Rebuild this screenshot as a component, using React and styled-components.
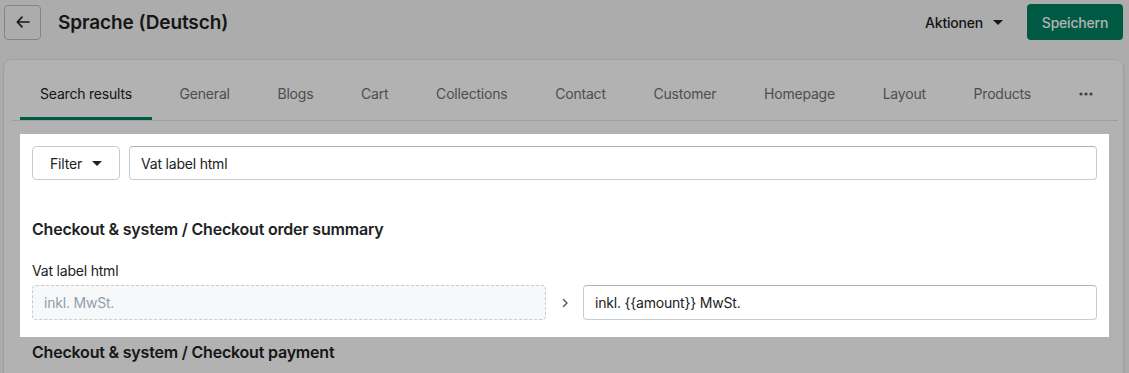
import React from "react";
import styled, { createGlobalStyle } from "styled-components";

const GlobalStyle = createGlobalStyle`
  html, body {
    margin: 0;
    padding: 0;
    background: #f6f6f7;
    overflow: hidden;
  }
  body {
    font-family: Inter, "Noto Sans", "Liberation Sans", sans-serif;
    color: #202223;
    letter-spacing: -0.2px;
    -webkit-font-smoothing: antialiased;
  }
  * {
    box-sizing: border-box;
  }
  button {
    letter-spacing: inherit;
  }
`;

const Page = styled.div`
  padding: 4px 6px 0 4px;
  height: 373px;
  overflow: hidden;
`;

const Header = styled.header`
  display: flex;
  align-items: center;
  height: 36px;
`;

const BackButton = styled.button`
  width: 37px;
  height: 35px;
  display: flex;
  align-items: center;
  justify-content: center;
  border: 1px solid #babfc3;
  border-radius: 4px;
  background: #f6f6f7;
  color: #202223;
  padding: 0;
`;

const Title = styled.h1`
  margin: 0 0 0 17px;
  font-size: 19px;
  font-weight: 600;
  letter-spacing: -0.1px;
  flex: 1;
`;

const ActionsButton = styled.button`
  display: flex;
  align-items: center;
  gap: 10px;
  border: 0;
  background: transparent;
  font: inherit;
  font-size: 14px;
  font-weight: 500;
  color: #202223;
  padding: 0;
  margin-right: 24px;
`;

const Caret = styled.span`
  width: 0;
  height: 0;
  border-left: 5px solid transparent;
  border-right: 5px solid transparent;
  border-top: 5px solid currentColor;
`;

const SaveButton = styled.button`
  height: 36px;
  width: 96px;
  border: 0;
  border-radius: 4px;
  background: #008060;
  color: #fff;
  font: inherit;
  font-size: 14px;
  font-weight: 500;
`;

const Card = styled.section`
  margin-top: 20px;
  background: #fff;
  border-radius: 8px;
  box-shadow: 0 0 0 1px rgba(63, 63, 68, 0.05), 0 1px 3px rgba(63, 63, 68, 0.15);
  height: 330px;
`;

const Tabs = styled.nav`
  display: flex;
  gap: 7.7px;
  margin: 0 5px 0 8px;
  padding-left: 8px;
  border-bottom: 1px solid #e1e3e5;
`;

const Tab = styled.button`
  flex-shrink: 0;
  white-space: nowrap;
  height: 60px;
  padding: 24px 20px 13px;
  border: 0;
  border-bottom: 3px solid ${({ $active }) => ($active ? "#008060" : "transparent")};
  background: transparent;
  font: inherit;
  font-size: 14px;
  line-height: 20px;
  color: ${({ $active }) => ($active ? "#202223" : "#6d7175")};
  display: flex;
  align-items: center;
`;

const Spotlight = styled.div`
  position: relative;
  z-index: 2;
  margin: 13px 14px 0 16px;
  padding: 12px 12px 17px;
  background: #fff;
  box-shadow: 0 0 0 3000px rgba(0, 0, 0, 0.3);
`;

const FilterRow = styled.div`
  display: flex;
  gap: 9px;
`;

const FilterButton = styled.button`
  width: 88px;
  height: 34px;
  display: flex;
  align-items: center;
  justify-content: center;
  gap: 10px;
  border: 1px solid #c9cccf;
  border-radius: 4px;
  background: #fff;
  font: inherit;
  font-size: 14px;
  color: #202223;
`;

const SearchInput = styled.div`
  flex: 1;
  height: 34px;
  display: flex;
  align-items: center;
  padding: 0 11px;
  border: 1px solid #c9cccf;
  border-top-color: #aeb4b9;
  border-radius: 4px;
  font-size: 14px;
`;

const SectionTitle = styled.h2`
  margin: ${({ $top }) => $top}px 0 0;
  font-size: 16px;
  line-height: 24px;
  font-weight: 600;
  letter-spacing: -0.2px;
  color: #202223;
`;

const FieldLabel = styled.div`
  margin-top: 20px;
  font-size: 14px;
  line-height: 20px;
`;

const FieldRow = styled.div`
  margin-top: 4px;
  display: grid;
  grid-template-columns: 1fr 37px 1fr;
  align-items: center;
`;

const SourceField = styled.div`
  height: 35px;
  display: flex;
  align-items: center;
  padding: 0 11px;
  border: 1px dashed #c4cdd5;
  border-radius: 4px;
  background: #f6f8fa;
  color: #919eab;
  font-size: 14px;
`;

const Chevron = styled.div`
  display: flex;
  justify-content: center;
  color: #5c5f62;
`;

const TargetField = styled(SearchInput)`
  height: 35px;
`;

const Below = styled.div`
  padding: 3px 0 0 28px;
`;

const tabs = [
  "Search results",
  "General",
  "Blogs",
  "Cart",
  "Collections",
  "Contact",
  "Customer",
  "Homepage",
  "Layout",
  "Products",
];

const App = () => (
  <>
    <GlobalStyle />
    <Page>
      <Header>
        <BackButton aria-label="Zurück">
          <svg width="20" height="20" viewBox="0 0 20 20" fill="none">
            <path
              d="M16 10H4.5M9 5.2 4.3 10 9 14.8"
              stroke="currentColor"
              strokeWidth="1.7"
              strokeLinecap="round"
              strokeLinejoin="round"
            />
          </svg>
        </BackButton>
        <Title>Sprache (Deutsch)</Title>
        <ActionsButton>
          Aktionen <Caret />
        </ActionsButton>
        <SaveButton>Speichern</SaveButton>
      </Header>

      <Card>
        <Tabs>
          {tabs.map((t, i) => (
            <Tab key={t} $active={i === 0}>
              {t}
            </Tab>
          ))}
          <Tab aria-label="Mehr">
            <svg width="14" height="4" viewBox="0 0 14 4">
              <circle cx="2" cy="2" r="1.6" fill="#5c5f62" />
              <circle cx="7" cy="2" r="1.6" fill="#5c5f62" />
              <circle cx="12" cy="2" r="1.6" fill="#5c5f62" />
            </svg>
          </Tab>
        </Tabs>

        <Spotlight>
          <FilterRow>
            <FilterButton>
              Filter <Caret />
            </FilterButton>
            <SearchInput>Vat label html</SearchInput>
          </FilterRow>

          <SectionTitle $top={37}>
            Checkout &amp; system / Checkout order summary
          </SectionTitle>
          <FieldLabel>Vat label html</FieldLabel>
          <FieldRow>
            <SourceField>inkl. MwSt.</SourceField>
            <Chevron>
              <svg width="12" height="12" viewBox="0 0 12 12" fill="none">
                <path
                  d="M4.5 2.5 8 6l-3.5 3.5"
                  stroke="currentColor"
                  strokeWidth="1.5"
                  strokeLinecap="round"
                  strokeLinejoin="round"
                />
              </svg>
            </Chevron>
            <TargetField>inkl. {"{{amount}}"} MwSt.</TargetField>
          </FieldRow>
        </Spotlight>

        <Below>
          <SectionTitle $top={0}>
            Checkout &amp; system / Checkout payment
          </SectionTitle>
        </Below>
      </Card>
    </Page>
  </>
);

export default App;
